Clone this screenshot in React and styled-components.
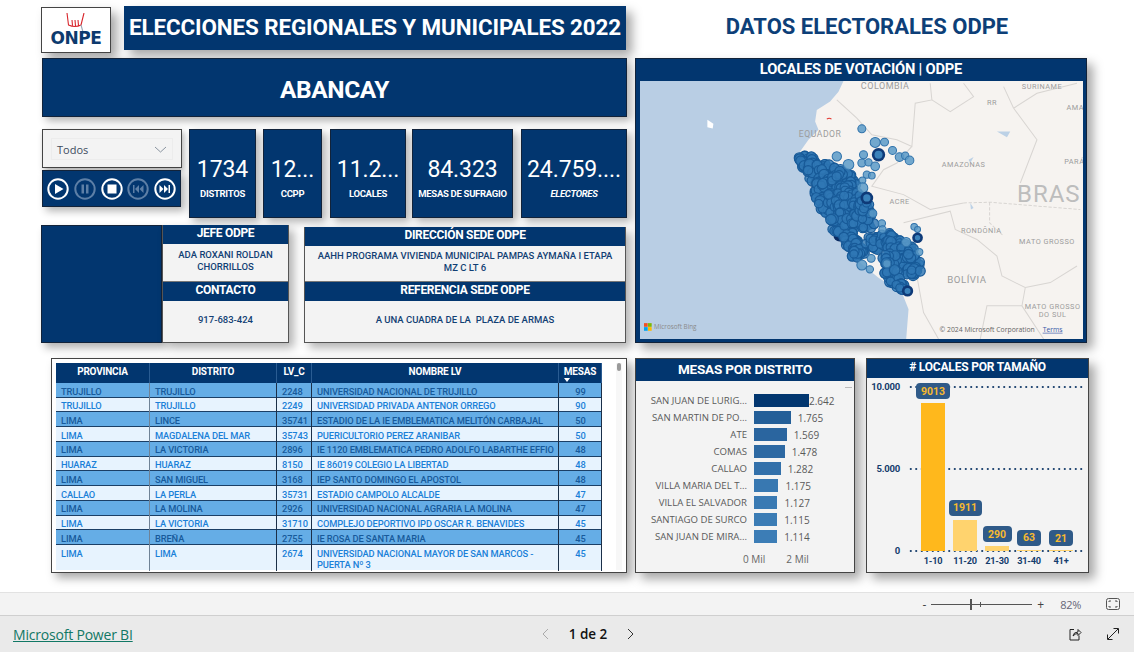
import React from 'react'
import styled, { createGlobalStyle } from 'styled-components'

const NAVY = '#02366f'
const HEAD_FONT = '"Roboto", "Liberation Sans", sans-serif'

const GlobalStyle = createGlobalStyle`
  html, body { margin: 0; padding: 0; background: #fff; }
  body { font-family: ${HEAD_FONT}; overflow: hidden; }
  * { box-sizing: border-box; }
`

const Page = styled.div`
  width: 1134px;
  height: 652px;
  display: flex;
  flex-direction: column;
`

const Report = styled.div`
  height: 592px;
  padding: 6px 0 0 41px;
  display: flex;
  gap: 8px;
`

const LeftColumn = styled.div`
  width: 586px;
  display: flex;
  flex-direction: column;
`

const RightColumn = styled.div`
  width: 454px;
  display: flex;
  flex-direction: column;
`

const TopRow = styled.div`
  display: flex;
  gap: 13px;
  height: 46px;
`

const Logo = styled.div`
  width: 70px;
  height: 46px;
  margin-top: 1px;
  background: #fff;
  border: 1px solid #444;
  box-shadow: 6px 6px 10px rgba(0, 0, 0, 0.35);
  display: flex;
  flex-direction: column;
  align-items: center;
  padding-top: 5px;
`

const LogoText = styled.div`
  font-family: "DejaVu Sans", sans-serif;
  font-weight: 700;
  font-size: 17px;
  line-height: 14px;
  letter-spacing: -0.5px;
  color: #0d3a6e;
  margin-top: -1px;
`

const Title = styled.div`
  width: 502px;
  height: 44px;
  padding-bottom: 2px;
  background: ${NAVY};
  color: #fff;
  font-size: 22.4px;
  font-weight: 700;
  letter-spacing: -0.1px;
  display: flex;
  align-items: center;
  justify-content: center;
  box-shadow: 6px 6px 10px rgba(0, 0, 0, 0.35);
`

const Region = styled.div`
  height: 59px;
  margin: 6px 0 0 1px;
  padding-top: 3px;
  background: ${NAVY};
  border: 1px solid #12233a;
  color: #fff;
  font-size: 24.5px;
  font-weight: 700;
  letter-spacing: -0.4px;
  display: flex;
  align-items: center;
  justify-content: center;
  box-shadow: 4px 4px 8px rgba(0, 0, 0, 0.3);
`

const KpiRow = styled.div`
  display: flex;
  margin-top: 12px;
  height: 89px;
`

const Controls = styled.div`
  width: 148px;
  padding-left: 1px;
  display: flex;
  flex-direction: column;
  gap: 2px;
`

const Slicer = styled.div`
  width: 140px;
  height: 39px;
  background: #f3f3f3;
  border: 1px solid #444;
  padding: 8px 8px;
  box-shadow: 2px 3px 6px rgba(0, 0, 0, 0.3);
`

const SlicerBox = styled.div`
  height: 22px;
  border: 1px solid #ececec;
  padding: 0 5px;
  display: flex;
  align-items: center;
  justify-content: space-between;
  font-size: 11px;
  font-family: "Open Sans", sans-serif;
  color: #3d4c5e;
`

const Player = styled.div`
  width: 139px;
  height: 37px;
  background: ${NAVY};
  border: 1px solid #12233a;
  display: flex;
  align-items: center;
  justify-content: space-between;
  padding: 0 4px 0 4px;
  box-shadow: 4px 4px 8px rgba(0, 0, 0, 0.3);
`

const Kpi = styled.div`
  width: ${(p) => p.$width}px;
  margin-left: ${(p) => p.$gap}px;
  background: ${NAVY};
  border: 1px solid #12233a;
  color: #fff;
  display: flex;
  flex-direction: column;
  align-items: center;
  padding-top: 26px;
  box-shadow: 4px 4px 8px rgba(0, 0, 0, 0.3);
`

const KpiValue = styled.div`
  font-size: 23px;
  line-height: 28px;
  font-weight: 400;
  letter-spacing: -0.1px;
  white-space: nowrap;
`

const KpiLabel = styled.div`
  margin-top: 4px;
  font-size: 9.5px;
  line-height: 12px;
  font-weight: 700;
  letter-spacing: -0.3px;
  white-space: nowrap;
  font-style: ${(p) => (p.$italic ? 'italic' : 'normal')};
`

const InfoRow = styled.div`
  display: flex;
  margin-top: 7px;
  height: 118px;
`

const PhotoBox = styled.div`
  width: 121px;
  background: ${NAVY};
  border: 1px solid #12233a;
  box-shadow: 4px 5px 8px rgba(0, 0, 0, 0.3);
`

const InfoCard = styled.div`
  width: ${(p) => p.$width}px;
  margin-left: ${(p) => p.$gap}px;
  margin-top: ${(p) => p.$top}px;
  display: flex;
  flex-direction: column;
  border: 1px solid #555;
  border-top: 0;
  background: #f3f3f3;
  box-shadow: 5px 5px 9px rgba(0, 0, 0, 0.3);
`

const InfoHead = styled.div`
  height: 19px;
  flex-shrink: 0;
  padding-bottom: 3px;
  background: ${NAVY};
  color: #fff;
  font-size: 12px;
  font-weight: 700;
  letter-spacing: -0.3px;
  display: flex;
  align-items: center;
  justify-content: center;
`

const InfoBody = styled.div`
  flex: ${(p) => p.$grow || 1};
  border-bottom: ${(p) => (p.$line ? '1px solid #777' : 'none')};
  color: #123f74;
  font-size: 9.5px;
  line-height: 11.5px;
  font-weight: 500;
  text-align: center;
  display: flex;
  align-items: center;
  justify-content: center;
  padding: 0 6px 4px;
`

const TablePanel = styled.div`
  height: 215px;
  margin: 15px 0 0 10px;
  width: 576px;
  background: #fff;
  border: 1px solid #444;
  padding: 4px 0 0 4px;
  display: flex;
  box-shadow: 5px 5px 9px rgba(0, 0, 0, 0.35);
`

const TableWrap = styled.div`
  width: 546px;
  display: flex;
  flex-direction: column;
  height: 207px;
`

const COLS = '94px 127px 35px 247px 43px'

const HeadRow = styled.div`
  display: grid;
  grid-template-columns: ${COLS};
  height: 20px;
  background: ${NAVY};
  flex-shrink: 0;
`

const HeadCell = styled.div`
  position: relative;
  color: #fff;
  font-size: 10px;
  line-height: 17px;
  font-weight: 700;
  letter-spacing: -0.2px;
  text-align: center;
  border-right: 1px solid #2a5c92;
`

const SortMark = styled.span`
  position: absolute;
  left: 5px;
  top: 15px;
  border: 3px solid transparent;
  border-top: 4px solid #fff;
  border-bottom: 0;
`

const Row = styled.div`
  display: grid;
  grid-template-columns: ${COLS};
  height: ${(p) => (p.$tall ? '25px' : '14.85px')};
  background: ${(p) => (p.$dark ? '#65ade6' : '#e7f3fe')};
  color: ${(p) => (p.$dark ? '#175a9b' : '#1a80d8')};
  box-shadow: ${(p) => (p.$tall ? 'none' : 'inset 0 -1px 0 #1b3f66')};
`

const Cell = styled.div`
  font-size: 9.3px;
  line-height: 11.5px;
  font-weight: 500;
  padding: 2.5px 4px 0 5px;
  border-right: 1px solid ${(p) => (p.$soft ? '#6f8296' : '#1b2f48')};
  text-align: ${(p) => (p.$center ? 'center' : 'left')};
  letter-spacing: -0.12px;
  white-space: ${(p) => (p.$wrap ? 'normal' : 'nowrap')};
`

const ScrollTrack = styled.div`
  width: 6px;
  margin-left: 14px;
  height: 207px;
  background: #f7f7f7;
  display: flex;
  justify-content: center;
`

const ScrollThumb = styled.div`
  width: 4px;
  height: 8px;
  border-radius: 2px;
  background: #9a9a9a;
`

const Heading = styled.div`
  height: 46px;
  padding: 0 0 6px 10px;
  color: #0d3f78;
  font-size: 22px;
  font-weight: 700;
  display: flex;
  align-items: center;
  justify-content: center;
`

const MapPanel = styled.div`
  width: 452px;
  height: 285px;
  margin-top: 6px;
  background: ${NAVY};
  border: 1px solid #12233a;
  padding: 0 4px 3px 4px;
  display: flex;
  flex-direction: column;
  box-shadow: 6px 6px 10px rgba(0, 0, 0, 0.35);
`

const MapTitle = styled.div`
  height: 22px;
  padding-bottom: 2px;
  color: #fff;
  font-size: 14.7px;
  font-weight: 700;
  letter-spacing: -0.2px;
  display: flex;
  align-items: center;
  justify-content: center;
`

const ChartsRow = styled.div`
  display: flex;
  margin-top: 15px;
  gap: 11px;
`

const ChartPanel = styled.div`
  width: ${(p) => p.$width}px;
  height: 215px;
  background: #f3f3f3;
  border: 1px solid #444;
  box-shadow: 6px 6px 10px rgba(0, 0, 0, 0.35);
`

const ChartHead = styled.div`
  height: ${(p) => p.$height}px;
  padding-bottom: 3px;
  background: ${NAVY};
  color: #fff;
  font-size: ${(p) => p.$size}px;
  font-weight: 700;
  letter-spacing: -0.2px;
  display: flex;
  align-items: center;
  justify-content: center;
`

const BarBody = styled.div`
  padding-top: 11px;
  position: relative;
`

const DashMark = styled.div`
  position: absolute;
  right: 2px;
  top: 6px;
  width: 7px;
  height: 1px;
  background: #bbb;
`

const BarRow = styled.div`
  display: flex;
  align-items: center;
  height: 17px;
`

const BarLabel = styled.div`
  width: 111px;
  text-align: right;
  font-family: "Open Sans", sans-serif;
  font-size: 9.6px;
  color: #5a5a5a;
  white-space: nowrap;
`

const Bar = styled.div`
  height: 13px;
  margin-left: 7px;
  flex-shrink: 0;
  background: ${(p) => p.$color};
`

const BarValue = styled.div`
  margin-left: ${(p) => p.$gap}px;
  font-family: "Open Sans", sans-serif;
  font-size: 10px;
  color: #5a5a5a;
`

const AxisRow = styled.div`
  display: flex;
  margin: 7px 0 0 107px;
  gap: 21px;
  font-family: "Open Sans", sans-serif;
  font-size: 10px;
  color: #666;
`

const SizeBody = styled.div`
  display: flex;
  padding-top: 9px;
`

const YAxis = styled.div`
  width: 33px;
  height: 164px;
  display: flex;
  flex-direction: column;
  justify-content: space-between;
  align-items: flex-end;
  font-size: 9.5px;
  line-height: 0;
  font-weight: 700;
  letter-spacing: -0.2px;
  color: #143c6c;
`

const PlotArea = styled.div`
  margin-left: 8px;
  width: 175px;
`

const Plot = styled.div`
  position: relative;
  height: 164px;
  display: flex;
  align-items: flex-end;
  padding-left: 9px;
`

const GridLine = styled.div`
  position: absolute;
  left: 0;
  right: 0;
  top: ${(p) => p.$top}%;
  height: 2px;
  margin-top: -1px;
  background-image: radial-gradient(circle, #274b75 0.8px, transparent 1px);
  background-size: 5.5px 2px;
`

const Column = styled.div`
  position: relative;
  width: 32px;
  display: flex;
  flex-direction: column;
  align-items: center;
  gap: 4px;
`

const Chip = styled.div`
  width: ${(p) => p.$width}px;
  height: 16px;
  background: #2f5a88;
  border-radius: 4px;
  color: #f7b92f;
  font-size: 10.5px;
  font-weight: 700;
  display: flex;
  align-items: center;
  justify-content: center;
`

const SizeBar = styled.div`
  width: 24px;
  background: ${(p) => p.$color};
`

const XAxis = styled.div`
  display: flex;
  padding-left: 9px;
  margin-top: 4px;
`

const XLabel = styled.div`
  width: 32px;
  text-align: center;
  font-size: 9.2px;
  font-weight: 700;
  letter-spacing: -0.2px;
  color: #143c6c;
  white-space: nowrap;
`

const ZoomBar = styled.div`
  height: 23px;
  background: #f3f3f3;
  border-top: 1px solid #e2e2e2;
  display: flex;
  align-items: center;
  justify-content: flex-end;
  color: #444;
  font-family: "Open Sans", sans-serif;
  font-size: 12px;
  padding-right: 14px;
`

const ZoomTrack = styled.div`
  position: relative;
  width: 101px;
  height: 1px;
  margin: 0 5px;
  background: #555;
`

const ZoomThumb = styled.div`
  position: absolute;
  left: ${(p) => p.$left}px;
  top: ${(p) => -p.$size}px;
  width: ${(p) => p.$wide}px;
  height: ${(p) => p.$size * 2 + 1}px;
  background: #555;
`

const ZoomPercent = styled.span`
  margin: 0 25px 0 16px;
  font-size: 11px;
  color: #667;
  letter-spacing: -0.3px;
`

const Footer = styled.div`
  height: 37px;
  background: #eaeaea;
  border-top: 1px solid #cfcfcf;
  display: grid;
  grid-template-columns: 1fr 1fr 1fr;
  align-items: center;
  padding: 0 14px 0 13px;
`

const BrandLink = styled.a`
  color: #117865;
  font-family: "Open Sans", sans-serif;
  font-size: 14px;
  letter-spacing: -0.2px;
  text-decoration: underline;
`

const Pager = styled.div`
  display: flex;
  align-items: center;
  justify-content: center;
  gap: 20px;
  padding-left: 43px;
  color: #111;
  font-family: "Open Sans", sans-serif;
  font-size: 13.5px;
  font-weight: 600;
`

const FooterIcons = styled.div`
  display: flex;
  justify-content: flex-end;
  gap: 24px;
`

// player button, outline circle with a glyph inside
function PlayerButton({ off, children }) {
  const c = off ? '#5d7fa6' : '#fff'
  return (
    <svg width="22" height="22" viewBox="0 0 22 22" fill={c} stroke="none">
      <circle cx="11" cy="11" r="9.7" fill="none" stroke={c} strokeWidth="2" />
      {children}
    </svg>
  )
}

// seeded random so the bubbles stay the same every run
function makeBubbles() {
  let seed = 7
  const rnd = () => {
    seed = (seed * 16807) % 2147483647
    return seed / 2147483647
  }
  const spine = [
    [530, 335, 26], [560, 365, 35], [600, 385, 45], [590, 425, 40], [640, 400, 40], [650, 430, 30],
    [610, 465, 45], [660, 470, 50], [640, 520, 40], [700, 510, 38], [700, 470, 20], [660, 570, 26],
    [680, 610, 22], [730, 580, 25], [770, 570, 25], [790, 595, 32], [830, 610, 28], [840, 640, 30],
    [780, 630, 22], [850, 670, 22], [785, 682, 25], [810, 710, 15],
  ]
  const out = []
  spine.forEach(([x, y, r]) => {
    const n = Math.round(r * 1.05)
    for (let i = 0; i < n; i++) {
      const a = rnd() * Math.PI * 2
      const d = Math.sqrt(rnd()) * r
      out.push([x + Math.cos(a) * d, y + Math.sin(a) * d * 0.9, 12 + rnd() * 4])
    }
  })
  return out
}

// scattered points in the selva and the lighter single bubbles
const LOOSE = [
  [695, 237, 12], [735, 278, 15], [763, 277, 12], [787, 302, 12], [808, 322, 13], [825, 318, 11],
  [838, 332, 13], [620, 320, 14], [655, 345, 16], [700, 315, 12], [695, 340, 12], [715, 338, 11],
  [735, 350, 13], [710, 375, 11], [725, 378, 10], [697, 392, 10], [697, 415, 16], [728, 492, 12],
  [755, 522, 11], [757, 540, 11], [852, 532, 10], [862, 540, 9], [828, 578, 14], [723, 627, 12],
  [719, 660, 11], [695, 647, 15], [770, 643, 12], [867, 608, 11],
]

// dark stacks, on the coast they only peek out below the others
const COAST_STACKS = [[520, 340, 18], [556, 400, 16], [575, 448, 18], [628, 558, 18]]
const TOP_STACKS = [[745, 315, 20], [710, 445, 19], [862, 565, 16], [832, 725, 17]]

const BUBBLES = makeBubbles()

const MAP_LABELS = [
  [765, 116, 'COLOMBIA', 27], [1235, 116, 'SURINAME', 22], [1085, 166, 'RR', 22], [1335, 181, 'AMA', 22],
  [570, 262, 'EQUADOR', 26], [1000, 353, 'AMAZONAS', 22], [1332, 343, 'PARÁ', 22], [808, 462, 'ACRE', 22],
  [1053, 551, 'RONDÔNIA', 22], [1250, 585, 'MATO GROSSO', 22], [1010, 700, 'BOLÍVIA', 29],
  [1267, 780, 'MATO GROSSO', 22], [1267, 803, 'DO SUL', 22],
]

function PeruMap() {
  return (
    <svg width="443" height="259" viewBox="30 93 1328 777" preserveAspectRatio="none" style={{ display: 'block' }}>
      <rect x="30" y="93" width="1328" height="777" fill="#f6f3f0" />
      <path
        d="M30 93 L640 93 L625 125 L600 155 L560 180 L555 215 L565 240 L535 270 L510 305 L505 345 L530 385 L548 420 L565 470 L610 540 L650 600 L690 640 L745 685 L815 730 L835 780 L828 870 L30 870 Z"
        fill="#b9cee4"
      />
      <g fill="none" stroke="#d8d5d2" strokeWidth="3">
        <path d="M620 150 L680 205 L725 255 L800 270 L845 290 L855 160 L905 150 L900 100" />
        <path d="M845 290 L800 340 L760 360 L725 410 L820 435 L900 480 L1000 460" />
        <path d="M905 150 L960 185 L1030 140 L1000 100" />
        <path d="M1150 175 L1120 110 M1150 175 L1220 130 L1340 100 M1150 175 L1220 270 L1170 400" />
        <path d="M820 520 L960 485 L975 540 L1040 570 L1100 620 L1115 680 L1185 715 L1175 770 L1070 770 L1050 870" />
        <path d="M860 680 L880 790 L925 870 M1185 715 L1260 700 L1340 650 M1175 770 L1240 870" />
        <path d="M1000 460 L1080 458 L1350 480 M1078 458 L1078 520 L1120 560" strokeDasharray="10 5" />
      </g>
      <path d="M1100 245 L1130 262 L1140 245 Z M1015 330 L1030 322 L1020 340 Z M1020 460 L1030 475 L1022 480 Z" fill="#bcd1e6" />
      <path d="M232 210 L250 222 L248 236 L232 232 Z" fill="#fff" />
      <path d="M590 208 Q597 202 604 208" fill="none" stroke="#e2342d" strokeWidth="3" />
      <g fill="#9c9c9c" fontFamily="Roboto, sans-serif" textAnchor="middle">
        {MAP_LABELS.map(([x, y, text, size]) => (
          <text key={text + y} x={x} y={y} fontSize={size} letterSpacing="1.5">{text}</text>
        ))}
        <text x="1160" y="456" fontSize="72" textAnchor="start" fill="#bdbdbd" letterSpacing="3">BRAS</text>
      </g>
      {COAST_STACKS.map(([x, y, r]) => (
        <circle key={x} cx={x} cy={y} r={r} fill="#0b2c63" />
      ))}
      {BUBBLES.map(([x, y, r], i) => (
        <circle key={i} cx={x} cy={y} r={r} fill="#2f78b4" fillOpacity="0.82" stroke="#185a98" strokeWidth="3.5" />
      ))}
      {LOOSE.map(([x, y, r]) => (
        <circle key={`${x}-${y}`} cx={x} cy={y} r={r} fill="#5b9ac8" fillOpacity="0.85" stroke="#2f72ab" strokeWidth="3" />
      ))}
      {TOP_STACKS.map(([x, y, r]) => (
        <g key={x}>
          <circle cx={x} cy={y} r={r} fill="#0e3a78" />
          <circle cx={x} cy={y} r={r - 8} fill="#3a82bb" />
        </g>
      ))}
      <rect x="42" y="822" width="11" height="11" fill="#f25022" />
      <rect x="54" y="822" width="11" height="11" fill="#7fba00" />
      <rect x="42" y="834" width="11" height="11" fill="#00a4ef" />
      <rect x="54" y="834" width="11" height="11" fill="#ffb900" />
      <text x="72" y="841" fontSize="19" fontFamily="Open Sans, sans-serif" fill="#8a8a8a">Microsoft Bing</text>
      <text x="928" y="848" fontSize="20.5" fontFamily="Open Sans, sans-serif" fill="#666">© 2024 Microsoft Corporation</text>
      <text x="1237" y="848" fontSize="20.5" fontFamily="Open Sans, sans-serif" fill="#3b5ba8" textDecoration="underline">Terms</text>
    </svg>
  )
}

const KPIS = [
  { value: '1734', label: 'DISTRITOS', width: 67, gap: 0 },
  { value: '12...', label: 'CCPP', width: 59, gap: 7 },
  { value: '11.2...', label: 'LOCALES', width: 76, gap: 8 },
  { value: '84.323', label: 'MESAS DE SUFRAGIO', width: 101, gap: 6 },
  { value: '24.759....', label: 'ELECTORES', width: 106, gap: 8, italic: true },
]

const ROWS = [
  ['TRUJILLO', 'TRUJILLO', '2248', 'UNIVERSIDAD NACIONAL DE TRUJILLO', '99'],
  ['TRUJILLO', 'TRUJILLO', '2249', 'UNIVERSIDAD PRIVADA ANTENOR ORREGO', '90'],
  ['LIMA', 'LINCE', '35741', 'ESTADIO DE LA IE EMBLEMATICA MELITÓN CARBAJAL', '50'],
  ['LIMA', 'MAGDALENA DEL MAR', '35743', 'PUERICULTORIO PEREZ ARANIBAR', '50'],
  ['LIMA', 'LA VICTORIA', '2896', 'IE 1120 EMBLEMATICA PEDRO ADOLFO LABARTHE EFFIO', '48'],
  ['HUARAZ', 'HUARAZ', '8150', 'IE 86019 COLEGIO LA LIBERTAD', '48'],
  ['LIMA', 'SAN MIGUEL', '3168', 'IEP SANTO DOMINGO EL APOSTOL', '48'],
  ['CALLAO', 'LA PERLA', '35731', 'ESTADIO CAMPOLO ALCALDE', '47'],
  ['LIMA', 'LA MOLINA', '2926', 'UNIVERSIDAD NACIONAL AGRARIA LA MOLINA', '47'],
  ['LIMA', 'LA VICTORIA', '31710', 'COMPLEJO DEPORTIVO IPD OSCAR R. BENAVIDES', '45'],
  ['LIMA', 'BREÑA', '2755', 'IE ROSA DE SANTA MARIA', '45'],
  ['LIMA', 'LIMA', '2674', 'UNIVERSIDAD NACIONAL MAYOR DE SAN MARCOS - PUERTA Nº 3', '45'],
]

const DISTRICTS = [
  ['SAN JUAN DE LURIG...', 2642, '2.642', '#02366f'],
  ['SAN MARTIN DE PO...', 1765, '1.765', '#245f98'],
  ['ATE', 1569, '1.569', '#2a659f'],
  ['COMAS', 1478, '1.478', '#2d69a3'],
  ['CALLAO', 1282, '1.282', '#3270aa'],
  ['VILLA MARIA DEL T...', 1175, '1.175', '#3878b1'],
  ['VILLA EL SALVADOR', 1127, '1.127', '#3a7ab3'],
  ['SANTIAGO DE SURCO', 1115, '1.115', '#3b7cb5'],
  ['SAN JUAN DE MIRA...', 1114, '1.114', '#3c7db6'],
]

const SIZES = [
  { label: '1-10', count: 9013, chip: 34, color: '#ffb81c' },
  { label: '11-20', count: 1911, chip: 33, color: '#ffd36e' },
  { label: '21-30', count: 290, chip: 29, color: '#ffd36e' },
  { label: '31-40', count: 63, chip: 24, color: '#ffd36e' },
  { label: '41+', count: 21, chip: 24, color: '#ffd36e' },
]

export default function App() {
  return (
    <Page>
      <GlobalStyle />
      <Report>
        <LeftColumn>
          <TopRow>
            <Logo>
              <svg width="20" height="19" viewBox="0 0 20 19" fill="none" stroke="#d8262c" strokeWidth="1.1">
                <path d="M1 0 L2.5 12 Q9 15 15 12 L18 0 M6 7 L6.5 12.5 M9 7 L9.5 13 M12 7 L12.5 12.5" />
                <path d="M15 12 L17 19" stroke="#9aa6b5" />
              </svg>
              <LogoText>ONPE</LogoText>
            </Logo>
            <Title>ELECCIONES REGIONALES Y MUNICIPALES 2022</Title>
          </TopRow>

          <Region>ABANCAY</Region>

          <KpiRow>
            <Controls>
              <Slicer>
                <SlicerBox>
                  Todos
                  <svg width="13" height="7" viewBox="0 0 13 7" fill="none" stroke="#8a94a0">
                    <path d="M1 1 L6.5 6 L12 1" />
                  </svg>
                </SlicerBox>
              </Slicer>
              <Player>
                <PlayerButton><path d="M8 6 L16.5 11 L8 16 Z" /></PlayerButton>
                <PlayerButton off><path d="M7.5 6.5 H10 V15.5 H7.5 Z M12 6.5 H14.5 V15.5 H12 Z" /></PlayerButton>
                <PlayerButton><rect x="6.5" y="6.5" width="9" height="9" /></PlayerButton>
                <PlayerButton off><path d="M6 7 H7.5 V15 H6 Z M12 7 V15 L8 11 Z M16.5 7 V15 L12.5 11 Z" /></PlayerButton>
                <PlayerButton><path d="M14.5 7 H16 V15 H14.5 Z M5.5 7 L9.5 11 L5.5 15 Z M10 7 L14 11 L10 15 Z" /></PlayerButton>
              </Player>
            </Controls>
            {KPIS.map((k) => (
              <Kpi key={k.label} $width={k.width} $gap={k.gap}>
                <KpiValue>{k.value}</KpiValue>
                <KpiLabel $italic={k.italic}>{k.label}</KpiLabel>
              </Kpi>
            ))}
          </KpiRow>

          <InfoRow>
            <PhotoBox />
            <InfoCard $width={127} $gap={0} $top={0}>
              <InfoHead>JEFE ODPE</InfoHead>
              <InfoBody $line $grow={37}>ADA ROXANI ROLDAN<br />CHORRILLOS</InfoBody>
              <InfoHead>CONTACTO</InfoHead>
              <InfoBody $grow={41}>917-683-424</InfoBody>
            </InfoCard>
            <InfoCard $width={322} $gap={15} $top={2}>
              <InfoHead>DIRECCIÓN SEDE ODPE</InfoHead>
              <InfoBody $line $grow={35}>AAHH PROGRAMA VIVIENDA MUNICIPAL PAMPAS AYMAÑA I ETAPA<br />MZ C LT 6</InfoBody>
              <InfoHead>REFERENCIA SEDE ODPE</InfoHead>
              <InfoBody $grow={41}>A UNA CUADRA DE LA&nbsp; PLAZA DE ARMAS</InfoBody>
            </InfoCard>
          </InfoRow>

          <TablePanel>
            <TableWrap>
              <HeadRow>
                <HeadCell>PROVINCIA</HeadCell>
                <HeadCell>DISTRITO</HeadCell>
                <HeadCell>LV_C</HeadCell>
                <HeadCell>NOMBRE LV</HeadCell>
                <HeadCell>MESAS<SortMark /></HeadCell>
              </HeadRow>
              {ROWS.map((r, i) => (
                <Row key={r[2]} $dark={i % 2 === 0} $tall={i === ROWS.length - 1}>
                  <Cell $soft>{r[0]}</Cell>
                  <Cell>{r[1]}</Cell>
                  <Cell>{r[2]}</Cell>
                  <Cell $wrap={i === ROWS.length - 1}>{r[3]}</Cell>
                  <Cell $center>{r[4]}</Cell>
                </Row>
              ))}
            </TableWrap>
            <ScrollTrack><ScrollThumb /></ScrollTrack>
          </TablePanel>
        </LeftColumn>

        <RightColumn>
          <Heading>DATOS ELECTORALES ODPE</Heading>
          <MapPanel>
            <MapTitle>LOCALES DE VOTACIÓN | ODPE</MapTitle>
            <PeruMap />
          </MapPanel>

          <ChartsRow>
            <ChartPanel $width={220}>
              <ChartHead $height={22} $size={13.5}>MESAS POR DISTRITO</ChartHead>
              <BarBody>
                <DashMark />
                {DISTRICTS.map(([name, n, text, color], i) => (
                  <BarRow key={name}>
                    <BarLabel>{name}</BarLabel>
                    <Bar $color={color} style={{ width: (n / 2642) * 55 }} />
                    <BarValue $gap={i === 0 ? 0 : 7}>{text}</BarValue>
                  </BarRow>
                ))}
                <AxisRow>
                  <span>0 Mil</span>
                  <span>2 Mil</span>
                </AxisRow>
              </BarBody>
            </ChartPanel>

            <ChartPanel $width={223}>
              <ChartHead $height={19} $size={12}>
                # LOCALES POR TAMAÑO
              </ChartHead>
              <SizeBody>
                <YAxis>
                  <span>10.000</span>
                  <span>5.000</span>
                  <span>0</span>
                </YAxis>
                <PlotArea>
                  <Plot>
                    <GridLine $top={0} />
                    <GridLine $top={50} />
                    <GridLine $top={100} />
                    {SIZES.map((s) => (
                      <Column key={s.label}>
                        <Chip $width={s.chip}>{s.count}</Chip>
                        <SizeBar $color={s.color} style={{ height: Math.max((s.count / 10000) * 164, 1) }} />
                      </Column>
                    ))}
                  </Plot>
                  <XAxis>
                    {SIZES.map((s) => (
                      <XLabel key={s.label}>{s.label}</XLabel>
                    ))}
                  </XAxis>
                </PlotArea>
              </SizeBody>
            </ChartPanel>
          </ChartsRow>
        </RightColumn>
      </Report>

      <ZoomBar>
        <span>-</span>
        <ZoomTrack>
          <ZoomThumb $left={39} $size={5} $wide={2} />
          <ZoomThumb $left={49} $size={2} $wide={1} />
        </ZoomTrack>
        <span>+</span>
        <ZoomPercent>82%</ZoomPercent>
        <svg width="14" height="12" viewBox="0 0 14 12" fill="none" stroke="#555">
          <rect x="0.5" y="0.5" width="13" height="11" rx="2" />
          <path d="M3 4 V3 H5 M9 3 H11 V4 M11 8 V9 H9 M5 9 H3 V8" />
        </svg>
      </ZoomBar>

      <Footer>
        <div><BrandLink>Microsoft Power BI</BrandLink></div>
        <Pager>
          <svg width="8" height="12" viewBox="0 0 8 12" fill="none" stroke="#aaa"><path d="M7 1 L2 6 L7 11" /></svg>
          <span>1 de 2</span>
          <svg width="8" height="12" viewBox="0 0 8 12" fill="none" stroke="#333"><path d="M1 1 L6 6 L1 11" /></svg>
        </Pager>
        <FooterIcons>
          <svg width="14" height="14" viewBox="0 0 14 14" fill="none" stroke="#222">
            <path d="M6 2.5 H2 V13 H11 V8.5" />
            <path d="M5 9 Q5.5 5 10 5 V2.5 L13 5.5 L10 8.5 V6.5 Q7 6.5 5 9 Z" />
          </svg>
          <svg width="14" height="14" viewBox="0 0 14 14" fill="none" stroke="#222">
            <path d="M2 12 L12 2 M7.5 1.5 H12.5 V6.5 M1.5 7.5 V12.5 H6.5" />
          </svg>
        </FooterIcons>
      </Footer>
    </Page>
  )
}
